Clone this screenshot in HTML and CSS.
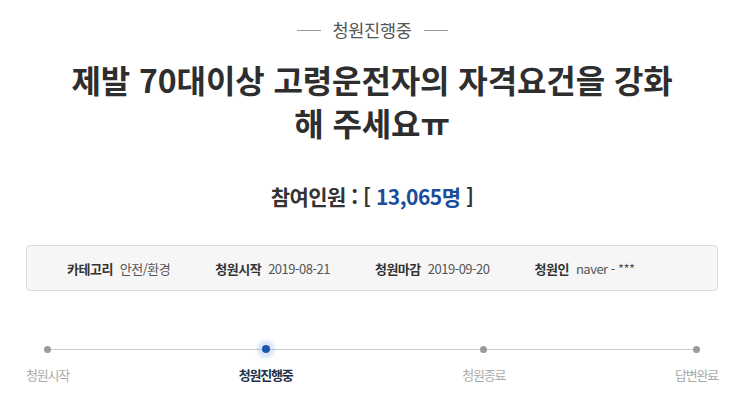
FILE: index.html
```html
<!DOCTYPE html>
<html lang="ko">
<head>
  <meta charset="UTF-8">
  <title>청원진행중</title>
  <link rel="stylesheet" href="styles.css">
</head>
<body>
  <!-- 청원 상단 -->
  <div class="petition">
    <div class="status"><span>청원진행중</span></div>
    <h1 class="title">제발 70대이상 고령운전자의 자격요건을 강화해 주세요ㅠ</h1>
    <p class="count">참여인원 : [ <span class="num">13,065명</span> ]</p>

    <!-- 청원 정보 -->
    <ul class="info">
      <li><b>카테고리</b>안전/환경</li>
      <li><b>청원시작</b>2019-08-21</li>
      <li><b>청원마감</b>2019-09-20</li>
      <li><b>청원인</b>naver - ***</li>
    </ul>

    <!-- 진행 단계 -->
    <ol class="steps">
      <li><i class="dot"></i><span>청원시작</span></li>
      <li class="on"><i class="dot"></i><span>청원진행중</span></li>
      <li><i class="dot"></i><span>청원종료</span></li>
      <li><i class="dot"></i><span>답변완료</span></li>
    </ol>
  </div>
</body>
</html>
```

FILE: styles.css
```css
/* 기본 스타일 초기화 */
* {
  margin: 0;
  padding: 0;
  box-sizing: border-box;
}
body {
  font-family: "Noto Sans CJK KR", "Noto Sans", sans-serif;
  background: #fff;
  color: #333;
}
.petition {
  padding: 20px 27px 0 26px;
  text-align: center;
}
/* 상태 표시 */
.status {
  display: flex;
  justify-content: center;
  align-items: center;
  gap: 12px;
  height: 20px;
  font-size: 17.5px;
  line-height: 20px;
  color: #555;
  letter-spacing: -0.3px;
}
.status::before,
.status::after {
  content: "";
  width: 24px;
  height: 1px;
  background: #999;
}
/* 제목 */
.title {
  max-width: 612px;
  margin: 18px auto 0;
  font-size: 32px;
  line-height: 42.5px;
  font-weight: 700;
  color: #2e2e2e;
  letter-spacing: -0.1px;
}
.count {
  margin-top: 39px;
  font-size: 21px;
  line-height: 28px;
  font-weight: 700;
  color: #333;
  letter-spacing: -0.5px;
}
.count .num {
  color: #1c4d9a;
}
/* 정보 박스 */
.info {
  list-style: none;
  display: flex;
  align-items: center;
  gap: 45px;
  height: 46px;
  margin-top: 35px;
  padding-left: 40px;
  background: #f6f6f6;
  border: 1px solid #ddd;
  border-radius: 4px;
  font-size: 13px;
  color: #555;
  letter-spacing: -0.5px;
}
.info b {
  margin-right: 7px;
  color: #333;
}
/* 진행 단계 */
.steps {
  position: relative;
  list-style: none;
  display: flex;
  justify-content: space-between;
  margin-top: 54px;
}
.steps::before {
  content: "";
  position: absolute;
  top: 4px;
  left: 22px;
  right: 23px;
  height: 1px;
  background: #ccc;
}
.steps li {
  display: flex;
  flex-direction: column;
  align-items: center;
  gap: 13px;
}
.steps .dot {
  position: relative;
  width: 7px;
  height: 7px;
  margin-top: 1px;
  border-radius: 50%;
  background: #9a9a9a;
}
.steps .on .dot {
  width: 8px;
  height: 8px;
  margin-top: 0;
  background: #1a56b0;
  box-shadow: 0 0 3px 5px rgba(60, 130, 230, 0.18);
}
.steps span {
  font-size: 13px;
  line-height: 18px;
  color: #aaa;
  letter-spacing: -1.2px;
}
.steps .on span {
  font-weight: 700;
  color: #24304a;
}
```
